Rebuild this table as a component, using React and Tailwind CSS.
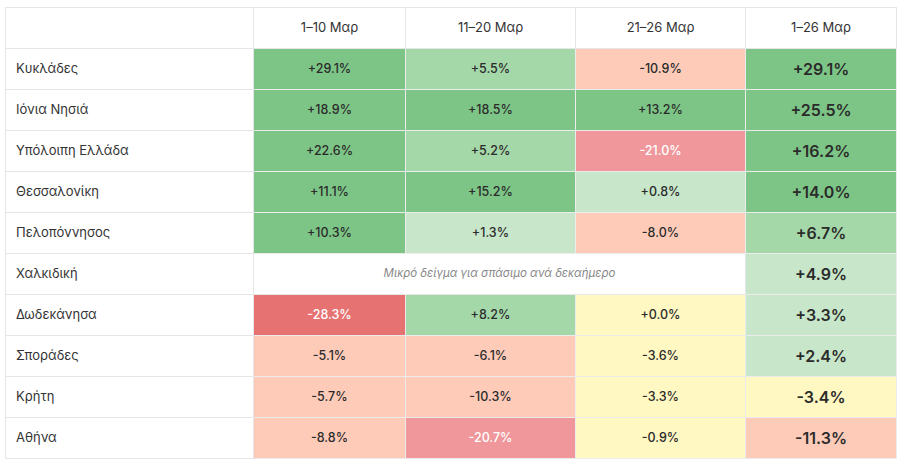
const cols = ['1–10 Μαρ', '11–20 Μαρ', '21–26 Μαρ', '1–26 Μαρ']

const C = {
  g3: 'bg-[#7dc586]',
  g2: 'bg-[#a5d8a9]',
  g1: 'bg-[#c8e7ca]',
  y: 'bg-[#fff8c2]',
  r1: 'bg-[#ffcbb9]',
  r2: 'bg-[#ef979b] text-white',
  r3: 'bg-[#e67272] text-white',
}

const rows = [
  { name: 'Κυκλάδες', cells: [['+29.1%', 'g3'], ['+5.5%', 'g2'], ['-10.9%', 'r1']], total: ['+29.1%', 'g3'] },
  { name: 'Ιόνια Νησιά', cells: [['+18.9%', 'g3'], ['+18.5%', 'g3'], ['+13.2%', 'g3']], total: ['+25.5%', 'g3'] },
  { name: 'Υπόλοιπη Ελλάδα', cells: [['+22.6%', 'g3'], ['+5.2%', 'g2'], ['-21.0%', 'r2']], total: ['+16.2%', 'g3'] },
  { name: 'Θεσσαλονίκη', cells: [['+11.1%', 'g3'], ['+15.2%', 'g3'], ['+0.8%', 'g1']], total: ['+14.0%', 'g3'] },
  { name: 'Πελοπόννησος', cells: [['+10.3%', 'g3'], ['+1.3%', 'g1'], ['-8.0%', 'r1']], total: ['+6.7%', 'g2'] },
  { name: 'Χαλκιδική', note: 'Μικρό δείγμα για σπάσιμο ανά δεκαήμερο', total: ['+4.9%', 'g1'] },
  { name: 'Δωδεκάνησα', cells: [['-28.3%', 'r3'], ['+8.2%', 'g2'], ['+0.0%', 'y']], total: ['+3.3%', 'g1'] },
  { name: 'Σποράδες', cells: [['-5.1%', 'r1'], ['-6.1%', 'r1'], ['-3.6%', 'y']], total: ['+2.4%', 'g1'] },
  { name: 'Κρήτη', cells: [['-5.7%', 'r1'], ['-10.3%', 'r1'], ['-3.3%', 'y']], total: ['-3.4%', 'y'] },
  { name: 'Αθήνα', cells: [['-8.8%', 'r1'], ['-20.7%', 'r2'], ['-0.9%', 'y']], total: ['-11.3%', 'r1'] },
]

const font = { fontFamily: 'Inter, "Noto Sans", sans-serif' }

export default function App() {
  return (
    <div className="w-[900px] h-[460px] bg-white pt-[7px] pl-[5px] overflow-hidden" style={font}>
      <table className="w-[891px] table-fixed border-collapse text-[#2b2b2b]">
        <colgroup>
          <col className="w-[248px]" />
          <col className="w-[152px]" />
          <col className="w-[170px]" />
          <col className="w-[170px]" />
          <col className="w-[151px]" />
        </colgroup>
        <thead>
          <tr className="h-[41px]">
            <th className="border border-[#e6e6e6]" />
            {cols.map(c => (
              <th key={c} className="border border-[#e6e6e6] text-[13px] font-normal text-[#333]">{c}</th>
            ))}
          </tr>
        </thead>
        <tbody>
          {rows.map(r => (
            <tr key={r.name} className="h-[41px]">
              <td className="border border-[#e6e6e6] pl-[10px] text-[13px] text-[#333]">{r.name}</td>
              {r.note ? (
                <td colSpan={3} className="border border-[#e6e6e6] text-center text-[11.5px] italic text-[#888]">{r.note}</td>
              ) : r.cells.map(([v, k], i) => (
                <td key={i} className={`border border-[#ececec] text-center text-[12.5px] font-medium ${C[k]}`}>{v}</td>
              ))}
              <td className={`border border-[#ececec] text-center text-[16px] font-semibold ${C[r.total[1]]}`}>{r.total[0]}</td>
            </tr>
          ))}
        </tbody>
      </table>
    </div>
  )
}
